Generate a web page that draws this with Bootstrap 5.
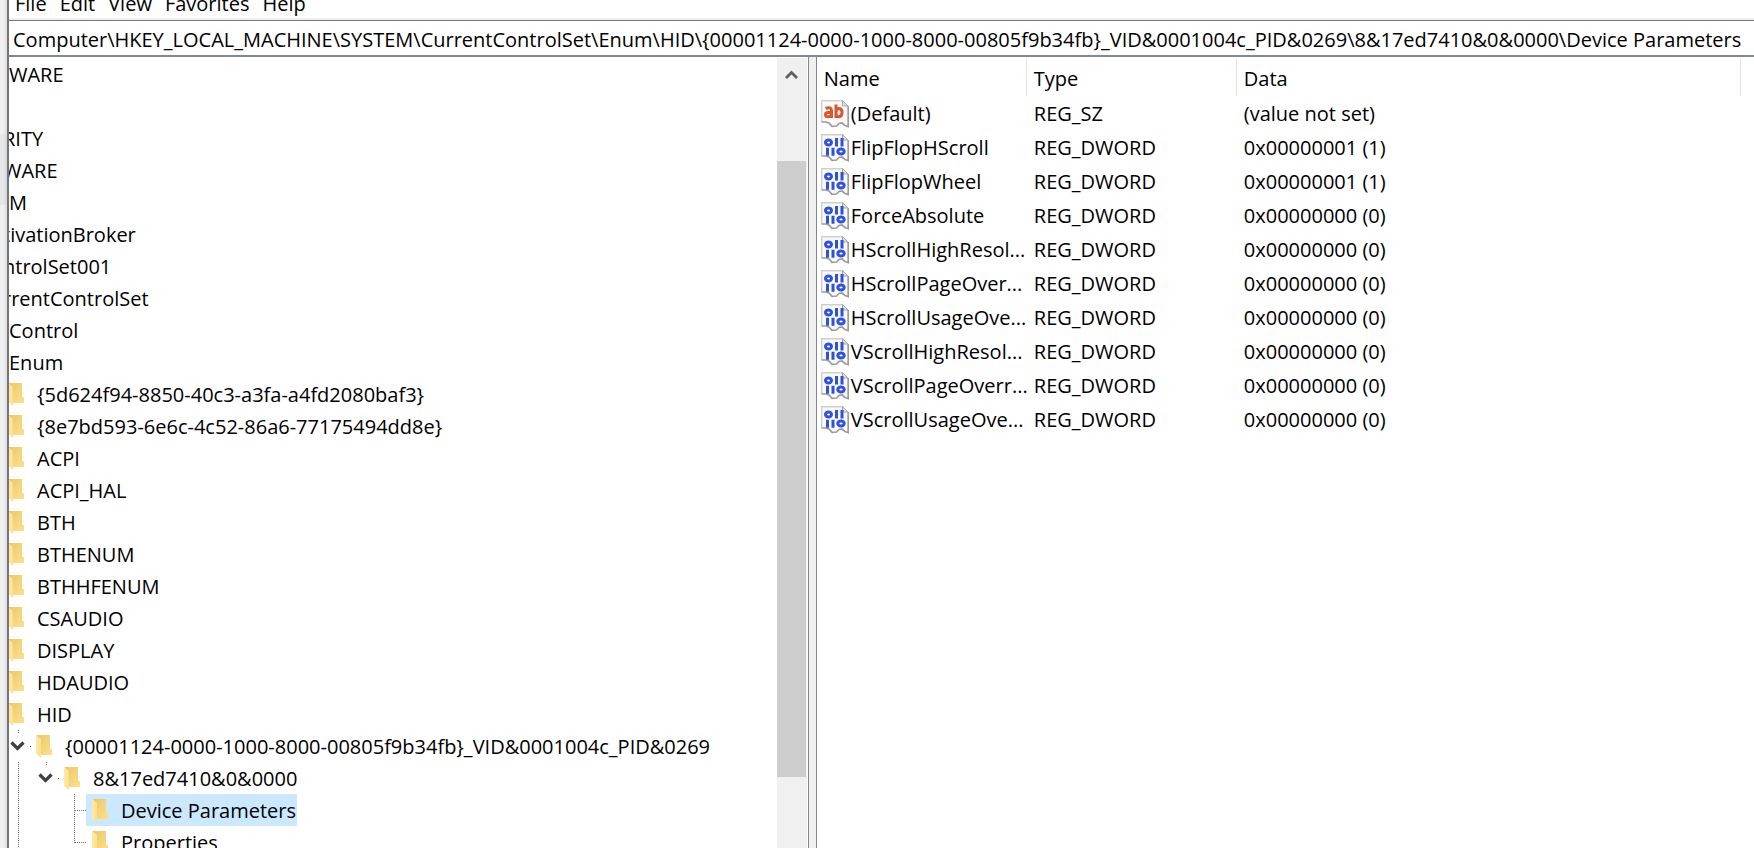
<!DOCTYPE html>
<html lang="en">
<head>
<meta charset="utf-8">
<meta name="viewport" content="width=device-width, initial-scale=1">
<title>Registry Editor</title>
<link href="https://cdn.jsdelivr.net/npm/bootstrap@5.3.0/dist/css/bootstrap.min.css" rel="stylesheet">
<style>
  body { font-family: "Open Sans", "Noto Sans", sans-serif; font-size: 20px; line-height: 32px; color: #000; background: #fff; }
  button, input { font: inherit; color: inherit; }
  .desk { width: 7px; background: linear-gradient(90deg, #f0f0f0 50%, #dcdcdc); }
  .desk-tab { height: 71px; margin-top: 134px; background: linear-gradient(90deg, #e5e7e9 50%, #d3d5d7); }
  .win { border-left: 2px solid #74757b; }
  .menu-strip { height: 20px; border-bottom: 2px solid #f0f0f0; }
  .menu-strip button { border: 0; background: none; padding: 0; line-height: 28px; }
  .menu-list { gap: 13px; padding-left: 6px; }
  .address { height: 37px; border: 0; border-top: 1px solid #7a7a7a; border-bottom: 2px solid #828790; padding: 2px 4px 0; outline: 0; }
  .tree-pane { width: 44%; padding-top: 1px; }
  .tree { margin: 0 0 0 -5px; line-height: 34px; }
  .tree li { height: 32px; white-space: nowrap; }
  .cell { flex: 0 0 28px; width: 28px; height: 32px; }
  .cell svg { display: block; }
  button.cell { border: 0; background: none; padding: 0; }
  .node-text { padding-left: 5px; }
  .plain { padding-left: 5px; }
  .clipped { margin-left: -6px; }
  .picked { background: #cce8ff; margin-left: -2px; padding: 0 1px 0 2px; }
  .track { flex: 0 0 30px; margin-top: 1px; border-right: 1px solid #fff; background: #f0f0f0; }
  .track button { flex: 0 0 13%; border: 0; background: none; padding: 0; line-height: 1; }
  .thumb { flex: 0 0 78%; margin-right: 1px; background: #cdcdcd; }
  .splitter { flex: 0 0 9px; background: #f0f0f0; border: solid #828790; border-width: 0 1px; }
  .values { table-layout: fixed; margin-top: 1px; }
  .values th { height: 39px; padding: 5px 0 0 7px; font-weight: 400; vertical-align: top; background: linear-gradient(#e5e5e5, #e5e5e5) right top / 1px 38px no-repeat; }
  .values td { height: 34px; padding: 0 0 0 7px; line-height: 34px; white-space: nowrap; }
  .values td:first-child { padding-left: 4px; }
  .values svg { flex: 0 0 28px; margin-right: 2px; }
  .c-name, .c-type { width: 210px; }
  .c-end { width: 13px; }
</style>
</head>
<body class="vh-100 overflow-hidden">
<svg width="0" height="0" class="position-absolute" aria-hidden="true">
  <defs>
    <linearGradient id="gBack" x1="0" y1="0" x2="1" y2="1"><stop offset="0" stop-color="#e9c769"/><stop offset="1" stop-color="#ffe08a"/></linearGradient>
    <linearGradient id="gFlap" x1="0" y1="0" x2="1" y2="0"><stop offset="0" stop-color="#ffeaa8"/><stop offset="1" stop-color="#fbdf8d"/></linearGradient>
    <symbol id="folder" viewBox="0 0 28 32">
      <path d="M5 5h13v13l2 2v5H9L4 24z" fill="url(#gBack)"/>
      <path d="M4 5l5 4v19l-5-4z" fill="url(#gFlap)"/>
    </symbol>
    <symbol id="chev" viewBox="0 0 28 32">
      <path d="M7.500 12.500l6 6 6-6" fill="none" stroke="#404040" stroke-width="3.200"/>
      <path d="M14.500 0v4" stroke="#606060" stroke-dasharray="1 1"/>
      <path d="M26 16.500h1" stroke="#606060"/>
    </symbol>
    <symbol id="vline" viewBox="0 0 28 32"><path d="M14.500 0v32" stroke="#707070" stroke-dasharray="1 1"/></symbol>
    <symbol id="tee" viewBox="0 0 28 32"><path d="M14.500 0v32M15 16.500h12" stroke="#707070" stroke-dasharray="1 1" fill="none"/></symbol>
    <symbol id="elbow" viewBox="0 0 28 32"><path d="M14.500 0v17M15 16.500h12" stroke="#707070" stroke-dasharray="1 1" fill="none"/></symbol>
    <symbol id="sheet" viewBox="0 0 28 28">
      <path d="M.7.700H22l5 5V26l-3-1-3-2.500-3 .5-2 2.500-5 .5-3-3-3-1.500H.7z" fill="#fafafa"/>
      <path d="M.7 22V.700H22" fill="none" stroke="#cfcfcf" stroke-width="1.400"/>
      <path d="M21.500.500V6H27z" fill="#dedede" stroke="#a8a8a8"/>
      <path d="M27.200 6v20.500l-3.200-1-3-2.500-3 .5-2.500 2.500-4.500.3-3-3.300-3-1H.5" fill="none" stroke="#9c9c9c" stroke-width="1.700"/>
    </symbol>
    <symbol id="val-sz" viewBox="0 0 28 28">
      <use href="#sheet"/>
      <g fill="none" stroke="#dc5531" stroke-width="3">
        <path d="M4.500 8.300Q10.500 6.500 10.500 10.500V18M10.500 12.500H7Q4.500 12.500 4.500 14.700T7 16.800Q9.500 16.800 10.500 14.500"/>
        <path d="M15 4.500V18M15 12.500Q15 8.500 18 8.500T21 12.500 18 16.700 15 12.500"/>
      </g>
    </symbol>
    <symbol id="val-dw" viewBox="0 0 28 28">
      <use href="#sheet"/>
      <g fill="none" stroke="#2f52dc" stroke-width="3">
        <ellipse cx="7.500" cy="8.500" rx="3" ry="2.500"/>
        <path d="M15.500 4v8.500M21 4v8.500M6.500 13.700v8M12 13.700v8"/>
        <ellipse cx="20" cy="17.500" rx="3.200" ry="2.500"/>
      </g>
    </symbol>
  </defs>
</svg>
<div class="d-flex h-100">
  <div class="desk flex-shrink-0"><div class="desk-tab"></div></div>
  <main class="win d-flex flex-column flex-grow-1 overflow-hidden">
    <nav class="menu-strip flex-shrink-0 overflow-hidden d-flex align-items-end" aria-label="Menu">
      <div class="menu-list d-flex">
        <button type="button">File</button><button type="button">Edit</button><button type="button">View</button><button type="button">Favorites</button><button type="button">Help</button>
      </div>
    </nav>
    <input class="address w-100 flex-shrink-0" type="text" aria-label="Address" value="Computer\HKEY_LOCAL_MACHINE\SYSTEM\CurrentControlSet\Enum\HID\{00001124-0000-1000-8000-00805f9b34fb}_VID&amp;0001004c_PID&amp;0269\8&amp;17ed7410&amp;0&amp;0000\Device Parameters">
    <div class="d-flex flex-grow-1 overflow-hidden">
      <section class="tree-pane overflow-hidden flex-shrink-0">
        <ul class="tree list-unstyled">
          <li class="d-flex"><span class="plain">WARE</span></li>
          <li class="d-flex"></li>
          <li class="d-flex"><span class="plain clipped">RITY</span></li>
          <li class="d-flex"><span class="plain clipped">WARE</span></li>
          <li class="d-flex"><span class="plain">M</span></li>
          <li class="d-flex"><span class="plain clipped">tivationBroker</span></li>
          <li class="d-flex"><span class="plain clipped">ntrolSet001</span></li>
          <li class="d-flex"><span class="plain clipped">rrentControlSet</span></li>
          <li class="d-flex"><span class="plain">Control</span></li>
          <li class="d-flex"><span class="plain">Enum</span></li>
          <li class="d-flex"><svg class="cell"><use href="#folder"/></svg><span class="node-text">{5d624f94-8850-40c3-a3fa-a4fd2080baf3}</span></li>
          <li class="d-flex"><svg class="cell"><use href="#folder"/></svg><span class="node-text">{8e7bd593-6e6c-4c52-86a6-77175494dd8e}</span></li>
          <li class="d-flex"><svg class="cell"><use href="#folder"/></svg><span class="node-text">ACPI</span></li>
          <li class="d-flex"><svg class="cell"><use href="#folder"/></svg><span class="node-text">ACPI_HAL</span></li>
          <li class="d-flex"><svg class="cell"><use href="#folder"/></svg><span class="node-text">BTH</span></li>
          <li class="d-flex"><svg class="cell"><use href="#folder"/></svg><span class="node-text">BTHENUM</span></li>
          <li class="d-flex"><svg class="cell"><use href="#folder"/></svg><span class="node-text">BTHHFENUM</span></li>
          <li class="d-flex"><svg class="cell"><use href="#folder"/></svg><span class="node-text">CSAUDIO</span></li>
          <li class="d-flex"><svg class="cell"><use href="#folder"/></svg><span class="node-text">DISPLAY</span></li>
          <li class="d-flex"><svg class="cell"><use href="#folder"/></svg><span class="node-text">HDAUDIO</span></li>
          <li class="d-flex"><svg class="cell"><use href="#folder"/></svg><span class="node-text">HID</span></li>
          <li class="d-flex"><button class="cell" type="button" aria-label="Collapse"><svg class="cell"><use href="#chev"/></svg></button><svg class="cell"><use href="#folder"/></svg><span class="node-text">{00001124-0000-1000-8000-00805f9b34fb}_VID&amp;0001004c_PID&amp;0269</span></li>
          <li class="d-flex"><svg class="cell"><use href="#vline"/></svg><button class="cell" type="button" aria-label="Collapse"><svg class="cell"><use href="#chev"/></svg></button><svg class="cell"><use href="#folder"/></svg><span class="node-text">8&amp;17ed7410&amp;0&amp;0000</span></li>
          <li class="d-flex"><svg class="cell"><use href="#vline"/></svg><span class="cell"></span><svg class="cell"><use href="#tee"/></svg><span class="picked d-flex"><svg class="cell"><use href="#folder"/></svg><span class="node-text">Device Parameters</span></span></li>
          <li class="d-flex"><svg class="cell"><use href="#vline"/></svg><span class="cell"></span><svg class="cell"><use href="#elbow"/></svg><svg class="cell"><use href="#folder"/></svg><span class="node-text">Properties</span></li>
        </ul>
      </section>
      <div class="track d-flex flex-column">
        <button type="button" class="d-flex justify-content-center" aria-label="Scroll up"><svg width="30" height="30" viewBox="0 0 30 30"><path d="M9 20l5.500-5.500L20 20" fill="none" stroke="#606060" stroke-width="2.800"/></svg></button>
        <div class="thumb"></div>
      </div>
      <div class="splitter"></div>
      <section class="flex-grow-1 overflow-hidden">
        <table class="values w-100">
          <colgroup><col class="c-name"><col class="c-type"><col><col class="c-end"></colgroup>
          <thead><tr><th scope="col">Name</th><th scope="col">Type</th><th scope="col">Data</th><td></td></tr></thead>
          <tbody>
            <tr><td><div class="d-flex align-items-center"><svg width="28" height="28"><use href="#val-sz"/></svg>(Default)</div></td><td>REG_SZ</td><td>(value not set)</td></tr>
            <tr><td><div class="d-flex align-items-center"><svg width="28" height="28"><use href="#val-dw"/></svg>FlipFlopHScroll</div></td><td>REG_DWORD</td><td>0x00000001 (1)</td></tr>
            <tr><td><div class="d-flex align-items-center"><svg width="28" height="28"><use href="#val-dw"/></svg>FlipFlopWheel</div></td><td>REG_DWORD</td><td>0x00000001 (1)</td></tr>
            <tr><td><div class="d-flex align-items-center"><svg width="28" height="28"><use href="#val-dw"/></svg>ForceAbsolute</div></td><td>REG_DWORD</td><td>0x00000000 (0)</td></tr>
            <tr><td><div class="d-flex align-items-center"><svg width="28" height="28"><use href="#val-dw"/></svg>HScrollHighResol...</div></td><td>REG_DWORD</td><td>0x00000000 (0)</td></tr>
            <tr><td><div class="d-flex align-items-center"><svg width="28" height="28"><use href="#val-dw"/></svg>HScrollPageOver...</div></td><td>REG_DWORD</td><td>0x00000000 (0)</td></tr>
            <tr><td><div class="d-flex align-items-center"><svg width="28" height="28"><use href="#val-dw"/></svg>HScrollUsageOve...</div></td><td>REG_DWORD</td><td>0x00000000 (0)</td></tr>
            <tr><td><div class="d-flex align-items-center"><svg width="28" height="28"><use href="#val-dw"/></svg>VScrollHighResol...</div></td><td>REG_DWORD</td><td>0x00000000 (0)</td></tr>
            <tr><td><div class="d-flex align-items-center"><svg width="28" height="28"><use href="#val-dw"/></svg>VScrollPageOverr...</div></td><td>REG_DWORD</td><td>0x00000000 (0)</td></tr>
            <tr><td><div class="d-flex align-items-center"><svg width="28" height="28"><use href="#val-dw"/></svg>VScrollUsageOve...</div></td><td>REG_DWORD</td><td>0x00000000 (0)</td></tr>
          </tbody>
        </table>
      </section>
    </div>
  </main>
</div>
<script src="https://cdn.jsdelivr.net/npm/bootstrap@5.3.0/dist/js/bootstrap.bundle.min.js"></script>
</body>
</html>
